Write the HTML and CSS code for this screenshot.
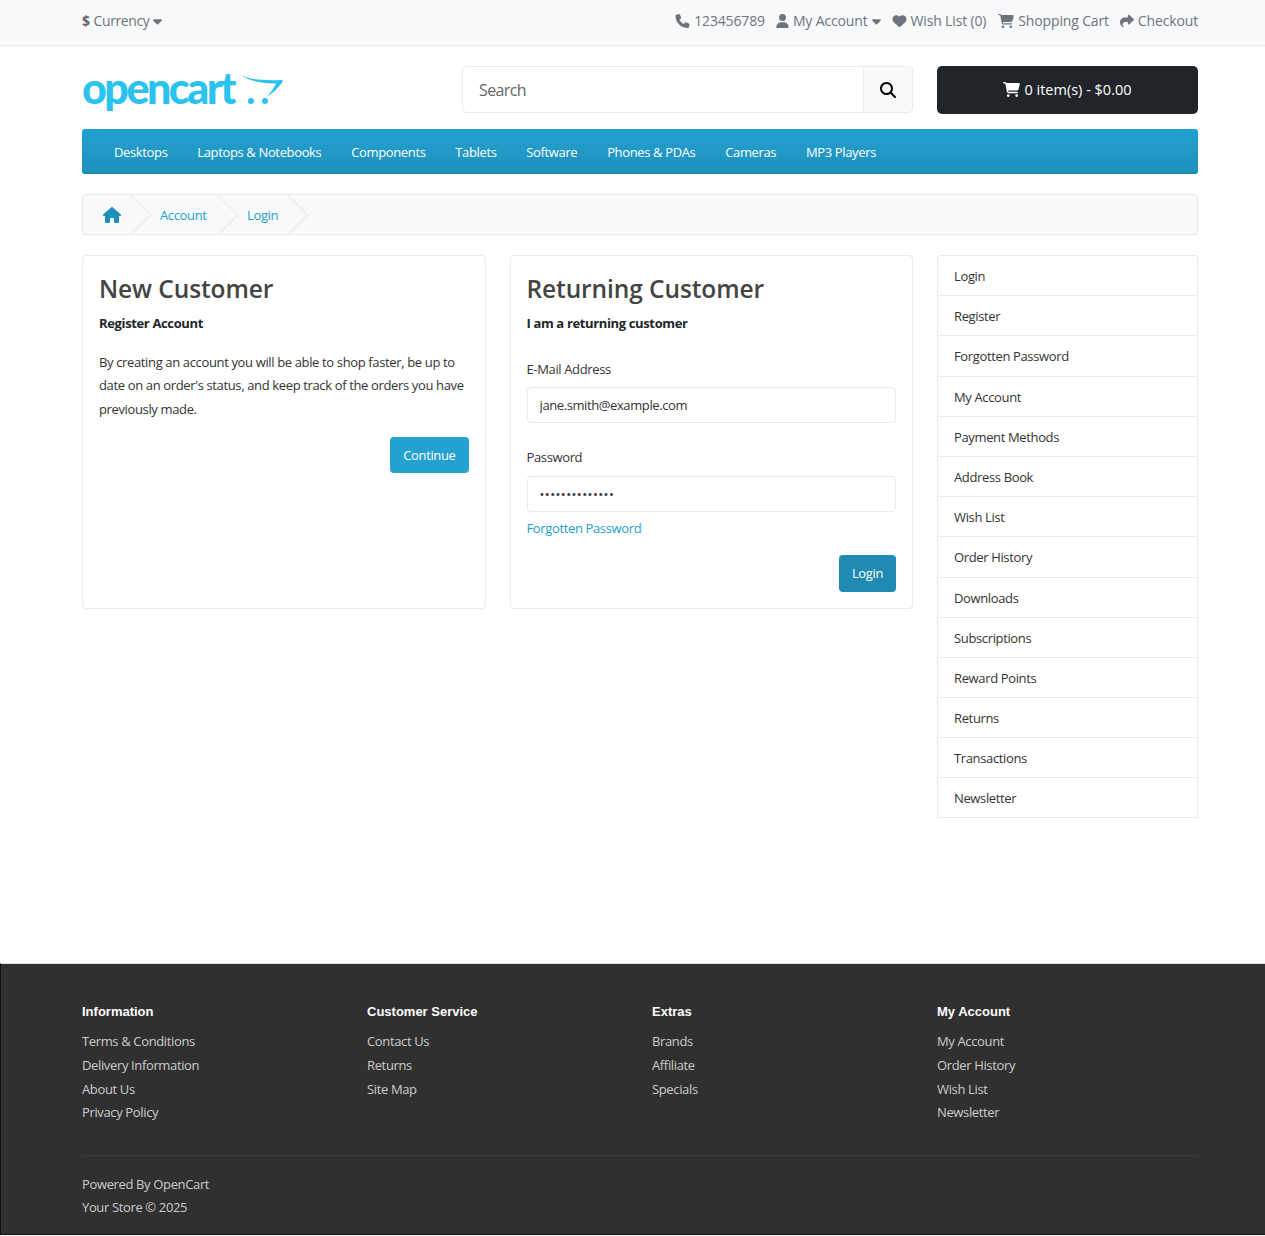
FILE: index.html
```html
<!DOCTYPE html>
<html lang="en">
  <head>
    <meta charset="UTF-8" />
    <meta name="viewport" content="width=device-width, initial-scale=1.0" />
    <title>Account Login</title>
    <link rel="stylesheet" href="styles.css">
  </head>
  <body>
    <svg class="sprites" width="0" height="0">
      <symbol id="i-caret" viewBox="0 0 320 512"><path d="M137.4 374.6c12.5 12.5 32.8 12.5 45.3 0l128-128c9.2-9.2 11.9-22.9 6.9-34.9s-16.6-19.8-29.6-19.8L32 192c-12.9 0-24.6 7.8-29.6 19.8s-2.7 25.7 6.9 34.9l128 128z"/></symbol>
      <symbol id="i-phone" viewBox="0 0 512 512"><path d="M164.9 24.6c-7.7-18.6-28-28.5-47.4-23.2l-88 24C12.1 30.2 0 46 0 64C0 311.4 200.6 512 448 512c18 0 33.8-12.1 38.6-29.5l24-88c5.3-19.4-4.6-39.7-23.2-47.4l-96-40c-16.3-6.8-35.2-2.1-46.3 11.6L304.7 368C234.3 334.7 177.3 277.7 144 207.3L193.3 167c13.7-11.2 18.4-30 11.6-46.3l-40-96z"/></symbol>
      <symbol id="i-user" viewBox="0 0 448 512"><path d="M224 256A128 128 0 1 0 224 0a128 128 0 1 0 0 256zm-45.7 48C79.8 304 0 383.8 0 482.3C0 498.7 13.3 512 29.7 512H418.3c16.4 0 29.7-13.3 29.7-29.7C448 383.8 368.2 304 269.7 304H178.3z"/></symbol>
      <symbol id="i-heart" viewBox="0 0 512 512"><path d="M47.6 300.4L228.3 469.1c7.5 7 17.4 10.9 27.7 10.9s20.2-3.9 27.7-10.9L464.4 300.4c30.4-28.3 47.6-68 47.6-109.5v-5.8c0-69.9-50.5-129.5-119.4-141C347 36.5 300.6 51.4 268 84L256 96 244 84c-32.6-32.6-79-47.5-124.6-39.9C50.5 55.6 0 115.2 0 185.1v5.8c0 41.5 17.2 81.2 47.6 109.5z"/></symbol>
      <symbol id="i-cart" viewBox="0 0 576 512"><path d="M0 24C0 10.7 10.7 0 24 0H69.5c22 0 41.5 12.8 50.6 32h411c26.3 0 45.5 25 38.6 50.4l-41 152.3c-8.5 31.4-37 53.3-69.5 53.3H170.7l5.4 28.5c2.2 11.3 12.1 19.5 23.6 19.5H488c13.3 0 24 10.7 24 24s-10.7 24-24 24H199.7c-34.6 0-64.3-24.6-70.7-58.5L77.4 54.5c-.7-3.8-4-6.5-7.9-6.5H24C10.7 48 0 37.3 0 24zM128 464a48 48 0 1 1 96 0 48 48 0 1 1 -96 0zm336-48a48 48 0 1 1 0 96 48 48 0 1 1 0-96z"/></symbol>
      <symbol id="i-share" viewBox="0 0 512 512"><path d="M307 34.8c-11.5 5.1-19 16.6-19 29.2v64H176C78.8 128 0 206.8 0 304C0 417.3 81.5 467.9 100.2 478.1c2.5 1.4 5.3 1.9 8.1 1.9c10.9 0 19.7-8.9 19.7-19.7c0-7.5-4.3-14.4-9.8-19.5C108.8 431.9 96 414.4 96 384c0-53 43-96 96-96h96v64c0 12.6 7.4 24.1 19 29.2s25 3 34.4-5.4l160-144c6.7-6.1 10.6-14.7 10.6-23.8s-3.8-17.7-10.6-23.8l-160-144c-9.4-8.5-22.9-10.6-34.4-5.4z"/></symbol>
      <symbol id="i-search" viewBox="0 0 512 512"><path d="M416 208c0 45.9-14.9 88.3-40 122.7L502.6 457.4c12.5 12.5 12.5 32.8 0 45.3s-32.8 12.5-45.3 0L330.7 376c-34.4 25.2-76.8 40-122.7 40C93.1 416 0 322.9 0 208S93.1 0 208 0S416 93.1 416 208zM208 352a144 144 0 1 0 0-288 144 144 0 1 0 0 288z"/></symbol>
      <symbol id="i-home" viewBox="0 0 576 512"><path d="M575.8 255.5c0 18-15 32.1-32 32.1h-32l.7 160.2c0 2.7-.2 5.4-.5 8.1V472c0 22.1-17.9 40-40 40H456c-1.1 0-2.2 0-3.3-.1c-1.4 .1-2.8 .1-4.2 .1H416 392c-22.1 0-40-17.9-40-40V448 384c0-17.7-14.3-32-32-32H256c-17.7 0-32 14.3-32 32v64 24c0 22.1-17.9 40-40 40H160 128.1c-1.5 0-3-.1-4.5-.2c-1.2 .1-2.4 .2-3.6 .2H104c-22.1 0-40-17.9-40-40V360c0-.9 0-1.9 .1-2.8V287.6H32c-18 0-32-14-32-32.1c0-9 3-17 10-24L266.4 8c7-7 15-8 22-8s15 2 21 7L564.8 231.5c8 7 12 15 11 24z"/></symbol>
    </svg>

    <nav class="topbar">
      <div class="container topbar-inner">
        <a href="#" class="top-link currency"><strong class="dollar">$</strong> Currency <svg class="caret"><use href="#i-caret"/></svg></a>
        <ul class="top-links">
          <li><a href="#" class="top-link"><svg class="icon phone"><use href="#i-phone"/></svg> 123456789</a></li>
          <li><a href="#" class="top-link"><svg class="icon user"><use href="#i-user"/></svg> My Account <svg class="caret"><use href="#i-caret"/></svg></a></li>
          <li><a href="#" class="top-link"><svg class="icon heart"><use href="#i-heart"/></svg> Wish List (0)</a></li>
          <li class="top-cart"><a href="#" class="top-link"><svg class="icon cart"><use href="#i-cart"/></svg> Shopping Cart</a></li>
          <li><a href="#" class="top-link"><svg class="icon share"><use href="#i-share"/></svg> Checkout</a></li>
        </ul>
      </div>
    </nav>

    <header class="container header">
      <a href="#" class="logo">
        <span class="logo-text">opencart</span>
        <svg class="logo-cart" viewBox="0 0 46 32">
          <path d="M0 0C6 5 20 7 42 6L43 7.500C38 14 33 19 27 23C31 18 34 14 36 9.500C22 10 8 7 0 0Z"/>
          <circle cx="11" cy="27" r="3"/>
          <circle cx="25" cy="27" r="3"/>
        </svg>
      </a>
      <form class="search">
        <input type="text" class="search-input" placeholder="Search">
        <button type="button" class="search-btn"><svg class="search-icon"><use href="#i-search"/></svg></button>
      </form>
      <button type="button" class="cart-btn"><svg class="cart-icon"><use href="#i-cart"/></svg> 0 item(s) - $0.00</button>
    </header>

    <div class="container">
      <ul class="menu">
        <li><a href="#">Desktops</a></li>
        <li><a href="#">Laptops &amp; Notebooks</a></li>
        <li><a href="#">Components</a></li>
        <li><a href="#">Tablets</a></li>
        <li><a href="#">Software</a></li>
        <li><a href="#">Phones &amp; PDAs</a></li>
        <li><a href="#">Cameras</a></li>
        <li><a href="#">MP3 Players</a></li>
      </ul>

      <ul class="breadcrumb">
        <li class="crumb-home"><a href="#"><svg class="home-icon"><use href="#i-home"/></svg></a></li>
        <li class="crumb-account"><a href="#">Account</a></li>
        <li class="crumb-login"><a href="#">Login</a></li>
      </ul>

      <div class="content">
        <div class="cards">
          <section class="card">
            <h2>New Customer</h2>
            <p class="lead">Register Account</p>
            <p class="blurb">By creating an account you will be able to shop faster, be up to date on an order's status, and keep track of the orders you have previously made.</p>
            <div class="actions"><a href="#" class="btn btn-primary">Continue</a></div>
          </section>
          <section class="card">
            <h2>Returning Customer</h2>
            <p class="lead">I am a returning customer</p>
            <form>
              <label class="field-label" for="email">E-Mail Address</label>
              <input id="email" class="field" type="text" value="jane.smith@example.com">
              <label class="field-label second" for="password">Password</label>
              <input id="password" class="field field-pass" type="password" value="jane.smith1234">
              <a href="#" class="forgot">Forgotten Password</a>
              <div class="actions login-actions"><a href="#" class="btn btn-dark">Login</a></div>
            </form>
          </section>
        </div>
        <aside class="side-list">
          <a href="#">Login</a>
          <a href="#">Register</a>
          <a href="#">Forgotten Password</a>
          <a href="#">My Account</a>
          <a href="#">Payment Methods</a>
          <a href="#">Address Book</a>
          <a href="#">Wish List</a>
          <a href="#">Order History</a>
          <a href="#">Downloads</a>
          <a href="#">Subscriptions</a>
          <a href="#">Reward Points</a>
          <a href="#">Returns</a>
          <a href="#">Transactions</a>
          <a href="#">Newsletter</a>
        </aside>
      </div>
    </div>

    <footer class="footer">
      <div class="container">
        <div class="footer-cols">
          <div>
            <h5>Information</h5>
            <ul>
              <li><a href="#">Terms &amp; Conditions</a></li>
              <li><a href="#">Delivery Information</a></li>
              <li><a href="#">About Us</a></li>
              <li><a href="#">Privacy Policy</a></li>
            </ul>
          </div>
          <div>
            <h5>Customer Service</h5>
            <ul>
              <li><a href="#">Contact Us</a></li>
              <li><a href="#">Returns</a></li>
              <li><a href="#">Site Map</a></li>
            </ul>
          </div>
          <div>
            <h5>Extras</h5>
            <ul>
              <li><a href="#">Brands</a></li>
              <li><a href="#">Affiliate</a></li>
              <li><a href="#">Specials</a></li>
            </ul>
          </div>
          <div>
            <h5>My Account</h5>
            <ul>
              <li><a href="#">My Account</a></li>
              <li><a href="#">Order History</a></li>
              <li><a href="#">Wish List</a></li>
              <li><a href="#">Newsletter</a></li>
            </ul>
          </div>
        </div>
        <hr class="footer-rule">
        <p class="powered">Powered By <a href="#">OpenCart</a></p>
        <p class="powered">Your Store &copy; 2025</p>
      </div>
    </footer>
  </body>
</html>
```

FILE: styles.css
```css
* {
  box-sizing: border-box;
}

html,
body {
  overflow-x: hidden;
}

body {
  margin: 0;
  font-family: "Open Sans", sans-serif;
  font-size: 13px;
  line-height: 20px;
  letter-spacing: -0.36px;
  color: #333;
  background-color: #fff;
}

a {
  text-decoration: none;
  color: inherit;
}

ul {
  list-style: none;
  margin: 0;
  padding: 0;
}

.sprites {
  position: absolute;
}

/* the original page is 1280 wide and cut off at the right */
.container {
  width: 1116px;
  margin-left: 82px;
}

/* top bar */
.topbar {
  height: 46px;
  padding-top: 11px;
  background-color: #f8f9fa;
  border-bottom: 1px solid #e8eaec;
}

.topbar-inner {
  display: flex;
  justify-content: space-between;
}

.top-links {
  display: flex;
  gap: 11px;
}

.top-cart {
  margin-left: 1px;
}

.top-link {
  display: flex;
  align-items: center;
  gap: 4px;
  color: #6c757d;
  fill: #6c757d;
  font-size: 14px;
  letter-spacing: -0.15px;
}

.currency {
  letter-spacing: -0.4px;
}

.dollar {
  color: #666;
}

.icon {
  height: 14px;
}

.phone {
  width: 15px;
}

.user {
  width: 13px;
}

.heart {
  width: 15px;
}

.cart {
  width: 16px;
}

.share {
  width: 14px;
}

.caret {
  width: 9px;
  height: 14px;
  fill: #6c757d;
}

/* header */
.header {
  display: flex;
  height: 83px;
  padding-top: 20px;
}

.logo {
  display: block;
  position: relative;
  width: 380px;
  height: 47px;
}

.logo-text {
  display: block;
  margin-top: -3px;
  font-family: "Lato", sans-serif;
  font-weight: 900;
  font-size: 43px;
  line-height: 50px;
  letter-spacing: -2.5px;
  color: #2ac2ef;
}

.logo-cart {
  position: absolute;
  left: 158px;
  top: 8px;
  width: 46px;
  height: 32px;
  fill: #2ac2ef;
}

.search {
  display: flex;
  width: 451px;
  height: 47px;
}

.search-input {
  flex: 1;
  min-width: 0;
  padding: 0 16px;
  border: 1px solid #e8eaec;
  border-radius: 5px 0 0 5px;
  font-family: inherit;
  font-size: 16px;
  letter-spacing: -0.6px;
  outline: 0;
}

.search-input::placeholder {
  color: #666;
}

.search-btn {
  width: 49px;
  padding: 0;
  border: 1px solid #e8eaec;
  border-left: 0;
  border-radius: 0 5px 5px 0;
  background-color: #f8f9fa;
}

.search-icon {
  display: block;
  width: 16px;
  height: 16px;
  margin: 0 auto;
}

.cart-btn {
  display: flex;
  align-items: center;
  justify-content: center;
  gap: 4px;
  width: 261px;
  height: 48px;
  margin-left: 24px;
  padding-bottom: 2px;
  border: 0;
  border-radius: 5px;
  background-color: #212529;
  color: #fff;
  font-family: inherit;
  font-size: 14.500px;
  letter-spacing: 0;
}

.cart-icon {
  width: 17px;
  height: 15px;
  fill: #fff;
}

/* menu */
.menu {
  display: flex;
  height: 45px;
  padding: 2px 0 0 32px;
  align-items: center;
  gap: 29.800px;
  border-radius: 3px;
  border-bottom: 1px solid #1b7ea6;
  background: linear-gradient(to bottom, #23a1d1, #1f90bb);
  color: #fff;
}

/* breadcrumb */
.breadcrumb {
  display: flex;
  height: 41px;
  margin-top: 20px;
  overflow: hidden;
  border: 1px solid #e8eaec;
  border-radius: 4px;
  background-color: #f8f9fa;
  color: #23a1d1;
}

.breadcrumb li {
  position: relative;
  line-height: 41px;
}

.breadcrumb li::after {
  content: "";
  position: absolute;
  top: 5px;
  right: -4px;
  width: 29px;
  height: 29px;
  transform: rotate(45deg);
  border-top: 1px solid #e8eaec;
  border-right: 1px solid #e8eaec;
}

.crumb-home {
  width: 58px;
  padding-left: 20px;
}

.crumb-account {
  width: 87px;
  padding-left: 19px;
}

.crumb-login {
  width: 70px;
  padding-left: 19px;
}

.home-icon {
  display: block;
  width: 18px;
  height: 16px;
  margin-top: 12px;
  fill: #1f90bb;
}

/* account content */
.content {
  display: grid;
  grid-template-columns: 831px 261px;
  gap: 24px;
  margin-top: 20px;
  align-items: start;
}

.cards {
  display: grid;
  grid-template-columns: 1fr 1fr;
  gap: 24px;
}

.card {
  height: 354px;
  padding: 16px;
  border: 1px solid #e8eaec;
  border-radius: 4px;
}

.card h2 {
  margin: 0;
  font-size: 24.500px;
  font-weight: 600;
  line-height: 33px;
  letter-spacing: -0.1px;
  color: #444;
}

.lead {
  margin: 8px 0 0;
  font-weight: 700;
  line-height: 20px;
  color: #212529;
}

.blurb {
  margin: 18px 0 0;
  line-height: 23.4px;
  color: #333;
}

.actions {
  display: flex;
  justify-content: flex-end;
  margin-top: 16px;
}

.btn {
  padding: 8px 13px;
  border-radius: 4px;
  color: #fff;
  line-height: 20px;
}

.btn-primary {
  background-color: #23a1d1;
}

.btn-dark {
  padding-bottom: 9px;
  background-color: #1f8ab2;
}

.field-label {
  display: block;
  margin-top: 26px;
  color: #333;
}

.field-label.second {
  margin-top: 24px;
}

.field {
  display: block;
  width: 100%;
  height: 36px;
  margin-top: 8px;
  padding: 0 12px;
  border: 1px solid #e8eaec;
  border-radius: 4px;
  font-family: inherit;
  font-size: 13px;
  letter-spacing: -0.4px;
  color: #333;
  outline: 0;
}

.field-pass {
  margin-top: 9px;
  letter-spacing: 0.45px;
}

.forgot {
  display: block;
  margin-top: 6px;
  color: #23a1d1;
}

.login-actions {
  margin-top: 17px;
}

/* side list */
.side-list {
  border: 1px solid #e8eaec;
  border-bottom: 0;
  border-radius: 4px 4px 0 0;
}

.side-list a {
  display: block;
  height: 40.2px;
  padding: 10px 16px;
  border-bottom: 1px solid #e8eaec;
  color: #333;
}

.side-list a:last-child {
  height: 39.4px;
}

/* footer */
.footer {
  height: 272px;
  margin-top: 145px;
  padding-top: 38px;
  border-top: 1px solid #ddd;
  border-left: 1px solid #111;
  border-bottom: 1px solid #111;
  background-color: #303030;
  color: #ccc;
}

.footer .container {
  margin-left: 81px;
}

.footer-cols {
  display: grid;
  grid-template-columns: repeat(4, 285px);
}

.footer h5 {
  margin: 0 0 8.200px;
  font-family: "Liberation Sans", sans-serif;
  font-size: 13px;
  font-weight: 700;
  line-height: 20px;
  letter-spacing: 0;
  color: #fff;
}

.footer li {
  line-height: 23.8px;
}

.footer-rule {
  height: 1px;
  margin: 29.800px 0 18px;
  border: 0;
  background-color: #3a3a3a;
}

.powered {
  margin: 0 0 3px;
  line-height: 20px;
}
```
